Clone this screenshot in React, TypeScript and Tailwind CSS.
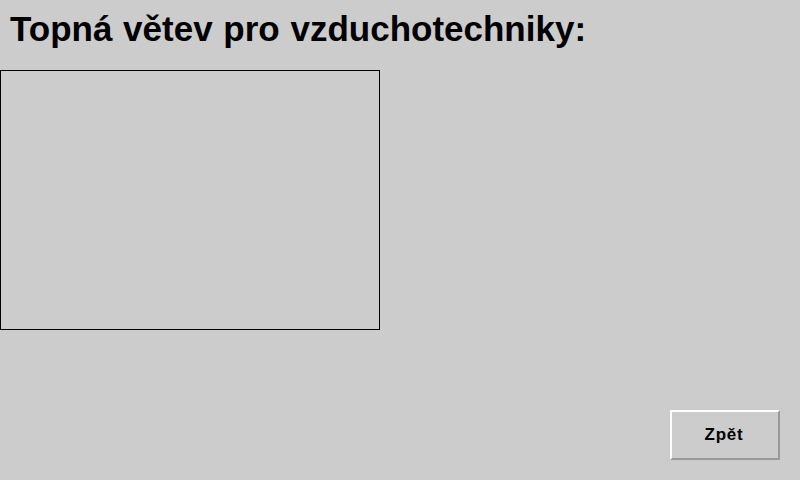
export default function App() {
  return (
    <div
      className="w-[800px] h-[480px] bg-[#cccccc] flex flex-col text-black overflow-hidden"
      style={{ fontFamily: '"Liberation Sans", Arial, sans-serif' }}
    >
      <h1 className="pl-[10px] pt-[7px] h-[70px] text-[35px] leading-[43px] font-bold [word-spacing:1px]">
        Topná větev pro vzduchotechniky:
      </h1>

      <div className="w-[380px] h-[260px] border border-black" />

      <div className="flex-1 flex items-end justify-end pr-[20px] pb-[20px]">
        <button className="w-[110px] h-[50px] pr-[2px] border-2 border-t-white border-l-white border-b-[#999999] border-r-[#999999] bg-[#cccccc] text-[17px] font-bold tracking-[0.8px]">
          Zpět
        </button>
      </div>
    </div>
  );
}
